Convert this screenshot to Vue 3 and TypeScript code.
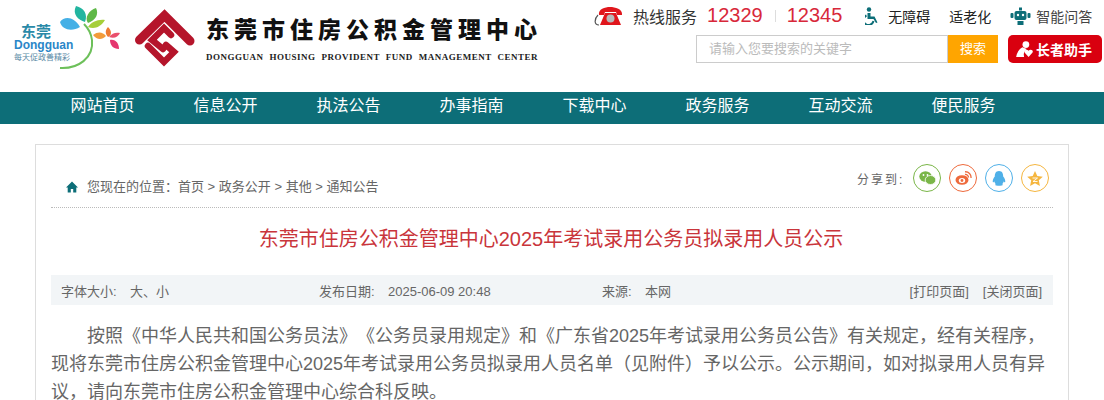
<script setup lang="ts">
const navItems: string[] = ['网站首页', '信息公开', '执法公告', '办事指南', '下载中心', '政务服务', '互动交流', '便民服务']
</script>

<template>
  <div class="page">
    <header class="header">
      <svg class="logo-city" width="120" height="74" viewBox="0 0 120 74">
        <path d="M52 68C70 69 86 58 84 40 83 32 80 28 76 24" fill="none" stroke="#6dc05a" stroke-width="2" />
        <path d="M72 27C66 16 56 16 52 22 54 30 64 32 72 27Z" fill="#45b0e6" />
        <path d="M68 6C76 8 80 14 77 22 70 20 64 14 68 6Z" fill="#22b5a0" />
        <path d="M88 8C91 14 88 20 80 23 76 18 81 10 88 8Z" fill="#5fb848" />
        <path d="M97 20C92 28 86 29 80 27 83 22 90 19 97 20Z" fill="#a5cf3a" />
        <path d="M85 35C90 31 95 32 98 36 94 40 89 40 85 35Z" fill="#f29b3a" />
        <path d="M100 27C104 31 104 35 100 37 97 34 97 30 100 27Z" fill="#ee7a32" />
        <path d="M101 37C104 33 108 32 112 33 110 37 106 39 101 37Z" fill="#ea4f6c" />
        <path d="M102 40C108 39 111 44 111 49 105 49 102 45 102 40Z" fill="#e5366f" />
        <text x="13" y="37" class="lc-cn">东莞</text>
        <text x="6" y="49" class="lc-en">Dongguan</text>
        <text x="6" y="60" class="lc-sm">每天促政善精彩</text>
      </svg>
      <svg class="logo-mark" width="70" height="70" viewBox="0 0 70 70">
        <path d="M9.500 36 34.500 11.500 60 37" fill="none" stroke="#b5152b" stroke-width="9" stroke-linecap="round" />
        <path d="M41 31 34 24 22 36 33 45M18 42 34 58 44 48 36 41" fill="none" stroke="#b5152b" stroke-width="6.500" stroke-linecap="round" />
      </svg>
      <div class="brand">
        <div class="brand-cn">东莞市住房公积金管理中心</div>
        <div class="brand-en">DONGGUAN HOUSING PROVIDENT FUND MANAGEMENT CENTER</div>
      </div>
      <div class="tools">
        <div class="tools-top">
          <svg class="phone" width="30" height="20" viewBox="0 0 30 20">
            <path d="M5 9C4 3 11 1 16 1S29 3 28 9L23 9 22 6H11L10 9Z" fill="#e0161c" />
            <path d="M11 7H22L27 19H6Z" fill="#e0161c" />
            <circle cx="16.500" cy="12.500" r="4" fill="#b9b9b9" />
            <path d="M4 9C0 13 0 19 5 19" fill="none" stroke="#555" stroke-width="1.200" />
          </svg>
          <span class="hot">热线服务</span>
          <span class="num first">12329</span>
          <span class="sep"></span>
          <span class="num">12345</span>
          <svg class="wheel" width="14" height="18" viewBox="0 0 14 18">
            <circle cx="4" cy="2.500" r="2.200" fill="#0d6e78" />
            <path d="M2.500 6H5.500V9.500H9.500L12.500 15.500 11 16 8.500 12H2.500Z" fill="#0d6e78" />
            <path d="M1.500 8.500A5 5 0 1 0 8.500 14" fill="none" stroke="#0d6e78" stroke-width="2" />
          </svg>
          <span class="t1">无障碍</span>
          <span class="t2">适老化</span>
          <svg class="robot" width="21" height="18" viewBox="0 0 21 18">
            <rect x="4.500" y="4" width="12" height="9" rx="2" fill="#0d6e78" />
            <rect x="9" y="0.500" width="3" height="3" fill="#0d6e78" />
            <rect x="0.500" y="6" width="3" height="5" rx="1" fill="#0d6e78" />
            <rect x="17.500" y="6" width="3" height="5" rx="1" fill="#0d6e78" />
            <rect x="7.500" y="14" width="6" height="4" fill="#0d6e78" />
            <circle cx="8" cy="8" r="1.200" fill="#fff" />
            <circle cx="13" cy="8" r="1.200" fill="#fff" />
          </svg>
          <span class="t3">智能问答</span>
        </div>
        <div class="tools-bottom">
          <div class="search-input">请输入您要搜索的关键字</div>
          <div class="search-btn">搜索</div>
          <div class="elder">
            <svg width="18" height="16" viewBox="0 0 20 18">
              <circle cx="11" cy="4" r="3.800" fill="#fff" />
              <path d="M7 7C3 9 1 13 0 18H9C8 14 9 11 12 9Z" fill="#fff" />
              <path d="M14 18 9.500 13C8 10.500 12 8.500 14 11 16 8.500 20 10.500 18.500 13Z" fill="#fff" />
            </svg>
            <span>长者助手</span>
          </div>
        </div>
      </div>
    </header>

    <nav class="nav">
      <a v-for="item in navItems" :key="item" class="nav-item">{{ item }}</a>
    </nav>

    <main class="card">
      <div class="crumb-row">
        <div class="crumb">
          <svg class="home" width="12" height="12" viewBox="0 0 12 12">
            <path d="M6 0.500 12 6.500H10.300V11.500H7.200V8H4.800V11.500H1.700V6.500H0Z" fill="#0d6e78" />
          </svg>
          <span>您现在的位置：首页 &gt; 政务公开 &gt; 其他 &gt; 通知公告</span>
        </div>
        <div class="share">
          <span class="share-label">分享到:</span>
          <span class="circle wechat">
            <svg width="17" height="14" viewBox="0 0 17 14">
              <ellipse cx="6.500" cy="5.500" rx="6.200" ry="5.200" fill="#7ab648" />
              <ellipse cx="11.500" cy="9" rx="5.300" ry="4.500" fill="#7ab648" stroke="#fff" stroke-width="0.800" />
              <circle cx="4.500" cy="4" r="0.900" fill="#fff" />
              <circle cx="8.500" cy="4" r="0.900" fill="#fff" />
            </svg>
          </span>
          <span class="circle weibo">
            <svg width="17" height="14" viewBox="0 0 17 14">
              <ellipse cx="7" cy="9" rx="6.500" ry="4.800" fill="#ee6a3c" />
              <ellipse cx="7" cy="9.500" rx="3.200" ry="2.500" fill="#fff" />
              <circle cx="7" cy="9.500" r="1.400" fill="#ee6a3c" />
              <path d="M10 0.800A5.500 5.500 0 0 1 16 7M10 3.500A3 3 0 0 1 13.500 6.500" fill="none" stroke="#ee6a3c" stroke-width="1.300" />
            </svg>
          </span>
          <span class="circle qq">
            <svg width="14" height="15" viewBox="0 0 14 15">
              <path d="M7 0C10.500 0 11.200 3 11.200 5.500 12.500 7 14 10 13 11.500L11.500 10.500C11.500 11.500 10.800 12.500 10.300 13 11.500 14 10.500 15 7 14.700 3.500 15 2.500 14 3.700 13 3.200 12.500 2.500 11.500 2.500 10.500L1 11.500C0 10 1.500 7 2.800 5.500 2.800 3 3.500 0 7 0Z" fill="#4fb0e8" />
            </svg>
          </span>
          <span class="circle qzone">
            <svg width="16" height="15" viewBox="0 0 16 15">
              <path d="M8 0 10.300 5 15.800 5.700 11.800 9.300 12.900 15 8 12.200 3.100 15 4.200 9.300 0.200 5.700 5.700 5Z" fill="#f5b63f" />
              <path d="M5.500 7H10.500L6 10.500H10.500" fill="none" stroke="#fff" stroke-width="0.900" />
            </svg>
          </span>
        </div>
      </div>

      <h1 class="title">东莞市住房公积金管理中心2025年考试录用公务员拟录用人员公示</h1>

      <div class="info">
        <span class="i-size"><span class="lab">字体大小:</span>大、小</span>
        <span class="i-date"><span class="lab">发布日期:</span>2025-06-09 20:48</span>
        <span class="i-src"><span class="lab">来源:</span>本网</span>
        <span class="i-act"><span>[打印页面]</span><span>[关闭页面]</span></span>
      </div>

      <p class="body-text">按照《中华人民共和国公务员法》《公务员录用规定》和《广东省2025年考试录用公务员公告》有关规定，经有关程序，现将东莞市住房公积金管理中心2025年考试录用公务员拟录用人员名单（见附件）予以公示。公示期间，如对拟录用人员有异议，请向东莞市住房公积金管理中心综合科反映。</p>
    </main>
  </div>
</template>

<style>
html, body { margin: 0; background: #fff; overflow: hidden; }
</style>

<style scoped>
.page {
  width: 1104px;
  height: 400px;
  overflow: hidden;
  font-family: "Liberation Sans", "Noto Sans CJK SC", sans-serif;
  color: #666;
}
.header { display: flex; height: 92px; }
.logo-city { margin-left: 8px; flex: none; }
.logo-mark { margin: 4px 0 0 2px; flex: none; }
.lc-cn { font-size: 15px; font-weight: 700; fill: #2a8aa8; }
.lc-en { font-size: 12px; font-weight: 700; fill: #2a86c8; }
.lc-sm { font-size: 8px; fill: #5a8aa6; }
.brand { margin: 16px 0 0 6px; width: 340px; flex: none; }
.brand-cn {
  font-size: 23px;
  font-weight: 900;
  letter-spacing: 5px;
  line-height: 28px;
  color: #111;
  white-space: nowrap;
}
.brand-en {
  font-family: "Liberation Serif", serif;
  font-size: 9px;
  font-weight: 700;
  word-spacing: 3.200px;
  letter-spacing: 0.500px;
  line-height: 12px;
  margin-top: 7px;
  color: #222;
  white-space: nowrap;
}
.tools { margin-left: 48px; flex: none; width: 510px; }
.tools-top { display: flex; align-items: center; height: 31px; margin-bottom: 4px; }
.phone { flex: none; }
.hot { margin-left: 9px; font-size: 16px; color: #333; }
.num { font-size: 20px; color: #d8283a; }
.num.first { margin-left: 10px; }
.sep { width: 1px; height: 12px; background: #ddd; margin: 0 11px 0 12px; }
.wheel { margin-left: 23px; flex: none; }
.t1 { margin-left: 9px; font-size: 14px; color: #222; }
.t2 { margin-left: 19px; font-size: 14px; color: #222; }
.robot { margin-left: 19px; flex: none; }
.t3 { margin-left: 5px; font-size: 14px; color: #444; }
.tools-bottom { display: flex; margin-left: 102px; }
.search-input {
  box-sizing: border-box;
  width: 252px;
  height: 28px;
  border: 1px solid #ccc;
  padding-left: 12px;
  font-size: 13px;
  line-height: 26px;
  color: #bbb;
}
.search-btn {
  width: 50px;
  height: 28px;
  background: #ffa500;
  color: #fff;
  font-size: 13px;
  line-height: 28px;
  text-align: center;
}
.elder {
  box-sizing: border-box;
  width: 94px;
  height: 28px;
  margin-left: 10px;
  padding-left: 8px;
  background: #d9000f;
  border-radius: 5px;
  color: #fff;
  display: flex;
  align-items: center;
  gap: 2px;
  font-size: 14px;
  font-weight: 700;
}
.nav {
  height: 32px;
  background: #0d6e78;
  display: flex;
  padding-left: 41px;
}
.nav-item {
  width: 123px;
  flex: none;
  text-align: center;
  color: #fff;
  font-size: 16px;
  line-height: 28px;
}
.card {
  box-sizing: border-box;
  width: 1034px;
  height: 300px;
  margin: 20px 0 0 35px;
  border: 1px solid #ddd;
  padding: 0 15px;
}
.crumb-row {
  height: 62px;
  display: flex;
  justify-content: space-between;
  border-bottom: 1px dotted #bbb;
}
.crumb {
  display: flex;
  align-items: center;
  gap: 9px;
  font-size: 13px;
  color: #666;
  margin: 31px 0 0 15px;
  height: 18px;
}
.home { margin-top: 4px; flex: none; }
.share {
  display: flex;
  align-items: center;
  gap: 8px;
  height: 28px;
  margin: 19px 4px 0 0;
}
.share-label {
  font-size: 12px;
  letter-spacing: 2px;
  color: #666;
  width: 48px;
  flex: none;
  white-space: nowrap;
}
.circle {
  box-sizing: border-box;
  width: 28px;
  height: 28px;
  border-radius: 50%;
  border: 1px solid;
  display: flex;
  align-items: center;
  justify-content: center;
}
.wechat { border-color: #7ab648; }
.weibo { border-color: #ee6a3c; }
.qq { border-color: #4fb0e8; }
.qzone { border-color: #f5b63f; }
.title {
  margin: 0;
  padding: 18px 2px 0 0;
  font-size: 20px;
  font-weight: 400;
  line-height: 26px;
  text-align: center;
  color: #c9353b;
}
.info {
  margin-top: 23px;
  height: 30px;
  background: #f2f5f7;
  display: flex;
  align-items: center;
  font-size: 13px;
  color: #666;
  white-space: nowrap;
}
.lab { display: inline-block; }
.i-size { margin-left: 10px; width: 258px; }
.i-size .lab { width: 69px; }
.i-date { width: 283px; }
.i-date .lab { width: 69px; }
.i-src { flex: 1; }
.i-src .lab { width: 43px; }
.i-act { display: flex; gap: 14px; margin-right: 11px; }
.body-text {
  margin: 17px 0 0;
  font-size: 18px;
  line-height: 28px;
  text-indent: 36px;
  color: #666;
  text-spacing-trim: space-all;
}
</style>
